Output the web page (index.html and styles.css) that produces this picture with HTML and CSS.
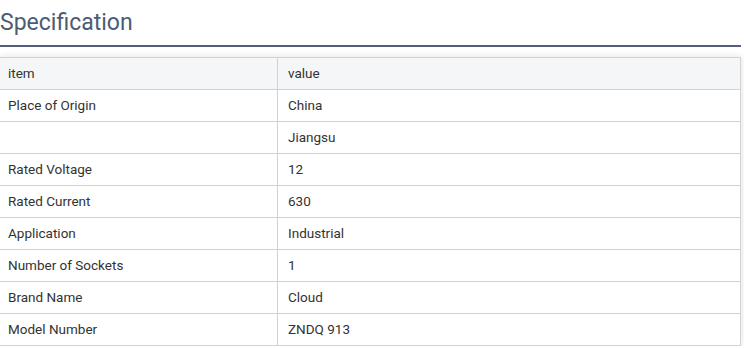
FILE: index.html
```html
<!DOCTYPE html>
<html lang="en">
<head>
    <meta charset="UTF-8">
    <meta name="viewport" content="width=device-width, initial-scale=1.0">
    <title>Specification</title>
    <link rel="stylesheet" href="styles.css">
</head>
<body>
    <div class="spec">
        <h2 class="spec-title">Specification</h2>
        <table class="spec-table">
            <thead>
                <tr>
                    <th>item</th>
                    <th>value</th>
                </tr>
            </thead>
            <tbody>
                <tr><td>Place of Origin</td><td>China</td></tr>
                <tr><td></td><td>Jiangsu</td></tr>
                <tr><td>Rated Voltage</td><td>12</td></tr>
                <tr><td>Rated Current</td><td>630</td></tr>
                <tr><td>Application</td><td>Industrial</td></tr>
                <tr><td>Number of Sockets</td><td>1</td></tr>
                <tr><td>Brand Name</td><td>Cloud</td></tr>
                <tr><td>Model Number</td><td>ZNDQ 913</td></tr>
            </tbody>
        </table>
    </div>
</body>
</html>
```

FILE: styles.css
```css
body {
    margin: 0;
    background: #fff;
    font-family: Roboto, "Liberation Sans", Arial, sans-serif;
    color: #333;
}

.spec {
    width: 742px;
    margin-left: -1px;
}

.spec-title {
    margin: 0;
    padding: 9px 0 0 1px;
    height: 47px;
    box-sizing: border-box;
    font-size: 23px;
    font-weight: 400;
    line-height: 27px;
    color: #4d5b74;
    border-bottom: 2px solid #555f78;
}

.spec-table {
    width: 100%;
    margin-top: 10px;
    border-collapse: collapse;
    font-size: 13.5px;
    box-shadow: 0 0 8px rgba(0, 0, 0, 0.12);
}

.spec-table th,
.spec-table td {
    height: 32px;
    padding: 0 8px 2px;
    border: 1px solid #d2d2d2;
    text-align: left;
    font-weight: 400;
    box-sizing: border-box;
}

.spec-table th {
    background-color: #f5f6f8;
}

.spec-table td:first-child,
.spec-table th:first-child {
    width: 278px;
}

.spec-table td + td,
.spec-table th + th {
    padding-left: 10px;
}
```
